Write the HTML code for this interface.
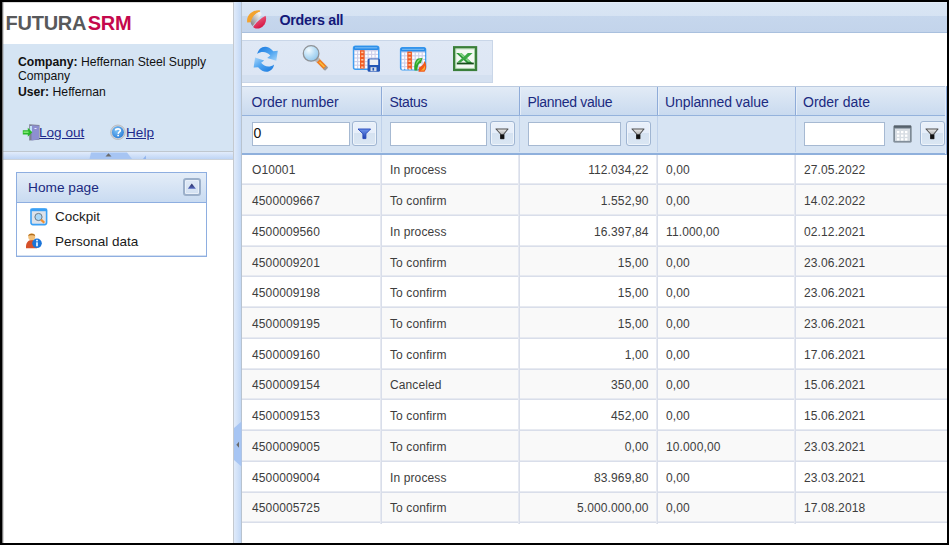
<!DOCTYPE html>
<html><head><meta charset="utf-8">
<style>
*{margin:0;padding:0;box-sizing:border-box}
html,body{width:949px;height:545px;overflow:hidden;background:#000;font-family:"Liberation Sans",sans-serif;position:relative}
body>div{position:absolute}
.t{position:absolute;white-space:nowrap}
</style></head><body>
<div style="left:2px;top:2px;width:945px;height:541px;background:#fff"></div>
<div class="t" style="left:5.5px;top:12px;font-size:20px;font-weight:bold;line-height:22px"><span style="color:#58595b;letter-spacing:-0.25px">FUTURA</span><span style="color:#c4084c;letter-spacing:-0.3px;margin-left:1.5px">SRM</span></div>
<div style="left:3px;top:44px;width:230px;height:107px;background:#d5e4f3"></div>
<div style="left:3px;top:151px;width:230px;height:1px;background:#bfc7cf"></div>
<div class="t" style="left:18px;top:55px;font-size:12.2px;color:#111;line-height:14px"><b>Company:</b> Heffernan Steel Supply</div>
<div class="t" style="left:18px;top:68.5px;font-size:12.2px;color:#111;line-height:14px">Company</div>
<div class="t" style="left:18px;top:85px;font-size:12.2px;color:#111;line-height:14px"><b>User:</b> Heffernan</div>
<div class="t" style="left:39px;top:125px;font-size:13.6px;color:#1e2a8c;text-decoration:underline;line-height:16px">Log out</div>
<div class="t" style="left:126px;top:125px;font-size:13.6px;color:#1e2a8c;text-decoration:underline;line-height:16px">Help</div>
<div style="left:3px;top:152px;width:230px;height:7px;background:linear-gradient(#e2ecfb,#bfd5f5)"></div>
<div style="left:3px;top:159px;width:230px;height:1px;background:#cdd3da"></div>
<div style="left:16px;top:172px;width:191px;height:85px;border:1px solid #8eaee0;background:#fff"></div>
<div style="left:17px;top:255px;width:189px;height:1px;background:#d3e0f2"></div>
<div style="left:17px;top:173px;width:189px;height:30px;background:linear-gradient(#e4edf8,#c9dbf1);border-bottom:1px solid #8eaee0"></div>
<div class="t" style="left:28px;top:180px;font-size:13.7px;color:#1b2a80;line-height:16px">Home page</div>
<div class="t" style="left:55px;top:209px;font-size:13.5px;color:#1a1a1a;line-height:16px">Cockpit</div>
<div class="t" style="left:55px;top:234px;font-size:13.5px;color:#1a1a1a;line-height:16px">Personal data</div>
<div style="left:233px;top:2px;width:1px;height:541px;background:#c4c9cf"></div>
<div style="left:234px;top:2px;width:7px;height:541px;background:linear-gradient(90deg,#dfeafa,#d2e2f8 50%,#c3d8f5)"></div>
<div style="left:241px;top:2px;width:1px;height:541px;background:#b8c3cf"></div>
<div style="left:242px;top:2px;width:705px;height:31px;background:linear-gradient(#e4ecf8 0,#dae6f4 1px,#d6e3f3 14px,#c6d7ed 14px,#c3d4eb 30px);border-bottom:1px solid #a9c0de"></div>
<div class="t" style="left:279.5px;top:11.5px;font-size:14.3px;font-weight:bold;color:#14197a;line-height:16px;letter-spacing:-0.3px">Orders all</div>
<div style="left:242px;top:40px;width:251px;height:43px;background:linear-gradient(#dfe8f5,#dde6f4 82%,#d4e0f0 82%,#d4e0f0);border:1px solid #c9d6e8;border-left:none"></div>
<div style="left:242px;top:86px;width:705px;height:30px;background:linear-gradient(#e2ebf6,#c9daef);border-top:1px solid #bccbe0;border-bottom:1px solid #94b2dc"></div>
<div style="left:242px;top:116px;width:705px;height:39px;background:#d7e4f3;border-bottom:2px solid #8fb0dc"></div>
<div style="left:945px;top:86px;width:1px;height:68px;background:#e4ecf7"></div>
<div style="left:946px;top:86px;width:1px;height:68px;background:#8eabd8"></div>
<div style="left:381px;top:87px;width:1px;height:28px;background:#8eabd8"></div>
<div style="left:382px;top:87px;width:1px;height:28px;background:#e6eef8"></div>
<div style="left:381px;top:116px;width:1px;height:36px;background:#bfd1ea"></div>
<div style="left:519px;top:87px;width:1px;height:28px;background:#8eabd8"></div>
<div style="left:520px;top:87px;width:1px;height:28px;background:#e6eef8"></div>
<div style="left:519px;top:116px;width:1px;height:36px;background:#bfd1ea"></div>
<div style="left:657px;top:87px;width:1px;height:28px;background:#8eabd8"></div>
<div style="left:658px;top:87px;width:1px;height:28px;background:#e6eef8"></div>
<div style="left:657px;top:116px;width:1px;height:36px;background:#bfd1ea"></div>
<div style="left:795px;top:87px;width:1px;height:28px;background:#8eabd8"></div>
<div style="left:796px;top:87px;width:1px;height:28px;background:#e6eef8"></div>
<div style="left:795px;top:116px;width:1px;height:36px;background:#bfd1ea"></div>
<div class="t" style="left:251.5px;top:93.7px;font-size:14px;color:#1b2a80;line-height:16px;letter-spacing:0px">Order number</div>
<div class="t" style="left:389.5px;top:93.7px;font-size:14px;color:#1b2a80;line-height:16px;letter-spacing:-0.34px">Status</div>
<div class="t" style="left:527.5px;top:93.7px;font-size:14px;color:#1b2a80;line-height:16px;letter-spacing:-0.3px">Planned value</div>
<div class="t" style="left:665px;top:93.7px;font-size:14px;color:#1b2a80;line-height:16px;letter-spacing:-0.1px">Unplanned value</div>
<div class="t" style="left:803px;top:93.7px;font-size:14px;color:#1b2a80;line-height:16px;letter-spacing:0px">Order date</div>
<div style="left:252px;top:122px;width:98px;height:24px;background:#fff;border:1px solid #a6b9d2"></div>
<div style="left:390px;top:122px;width:97px;height:24px;background:#fff;border:1px solid #a6b9d2"></div>
<div style="left:528px;top:122px;width:93px;height:24px;background:#fff;border:1px solid #a6b9d2"></div>
<div style="left:804px;top:122px;width:81px;height:24px;background:#fff;border:1px solid #a6b9d2"></div>
<div class="t" style="left:253.5px;top:125px;font-size:14px;color:#111;line-height:16px">0</div>
<div style="left:352px;top:121px;width:25px;height:25px;border:1px solid #9fb5d2;border-radius:3px;box-shadow:inset 0 0 0 1px #eef4fb;background:linear-gradient(#e9f0fa,#e6eefa 46%,#d5e2f1 46%,#dae6f3)"></div>
<div style="left:490px;top:121px;width:25px;height:25px;border:1px solid #9fb5d2;border-radius:3px;box-shadow:inset 0 0 0 1px #eef4fb;background:linear-gradient(#e9f0fa,#e6eefa 46%,#d5e2f1 46%,#dae6f3)"></div>
<div style="left:626px;top:121px;width:25px;height:25px;border:1px solid #9fb5d2;border-radius:3px;box-shadow:inset 0 0 0 1px #eef4fb;background:linear-gradient(#e9f0fa,#e6eefa 46%,#d5e2f1 46%,#dae6f3)"></div>
<div style="left:920px;top:121px;width:25px;height:25px;border:1px solid #9fb5d2;border-radius:3px;box-shadow:inset 0 0 0 1px #eef4fb;background:linear-gradient(#e9f0fa,#e6eefa 46%,#d5e2f1 46%,#dae6f3)"></div>
<div style="left:242px;top:155px;width:705px;height:30px;background:#fff"></div>
<div style="left:242px;top:183px;width:705px;height:1px;background:#e7eaf1"></div>
<div style="left:242px;top:184px;width:705px;height:1px;background:#d9deea"></div>
<div class="t" style="left:252px;top:163px;font-size:12px;color:#3d3d3d;line-height:14px;letter-spacing:0.12px">O10001</div>
<div class="t" style="left:390px;top:163px;font-size:12px;color:#3d3d3d;line-height:14px;letter-spacing:0.12px">In process</div>
<div class="t" style="right:300.5px;top:163px;font-size:12px;color:#3d3d3d;line-height:14px;letter-spacing:0.12px">112.034,22</div>
<div class="t" style="left:666px;top:163px;font-size:12px;color:#3d3d3d;line-height:14px;letter-spacing:0.12px">0,00</div>
<div class="t" style="left:804px;top:163px;font-size:12px;color:#3d3d3d;line-height:14px;letter-spacing:0.12px">27.05.2022</div>
<div style="left:242px;top:185px;width:705px;height:31px;background:#f9f9f9"></div>
<div style="left:242px;top:214px;width:705px;height:1px;background:#e7eaf1"></div>
<div style="left:242px;top:215px;width:705px;height:1px;background:#d9deea"></div>
<div class="t" style="left:252px;top:194px;font-size:12px;color:#3d3d3d;line-height:14px;letter-spacing:0.12px">4500009667</div>
<div class="t" style="left:390px;top:194px;font-size:12px;color:#3d3d3d;line-height:14px;letter-spacing:0.12px">To confirm</div>
<div class="t" style="right:300.5px;top:194px;font-size:12px;color:#3d3d3d;line-height:14px;letter-spacing:0.12px">1.552,90</div>
<div class="t" style="left:666px;top:194px;font-size:12px;color:#3d3d3d;line-height:14px;letter-spacing:0.12px">0,00</div>
<div class="t" style="left:804px;top:194px;font-size:12px;color:#3d3d3d;line-height:14px;letter-spacing:0.12px">14.02.2022</div>
<div style="left:242px;top:216px;width:705px;height:31px;background:#fff"></div>
<div style="left:242px;top:245px;width:705px;height:1px;background:#e7eaf1"></div>
<div style="left:242px;top:246px;width:705px;height:1px;background:#d9deea"></div>
<div class="t" style="left:252px;top:225px;font-size:12px;color:#3d3d3d;line-height:14px;letter-spacing:0.12px">4500009560</div>
<div class="t" style="left:390px;top:225px;font-size:12px;color:#3d3d3d;line-height:14px;letter-spacing:0.12px">In process</div>
<div class="t" style="right:300.5px;top:225px;font-size:12px;color:#3d3d3d;line-height:14px;letter-spacing:0.12px">16.397,84</div>
<div class="t" style="left:666px;top:225px;font-size:12px;color:#3d3d3d;line-height:14px;letter-spacing:0.12px">11.000,00</div>
<div class="t" style="left:804px;top:225px;font-size:12px;color:#3d3d3d;line-height:14px;letter-spacing:0.12px">02.12.2021</div>
<div style="left:242px;top:247px;width:705px;height:30px;background:#f9f9f9"></div>
<div style="left:242px;top:275px;width:705px;height:1px;background:#e7eaf1"></div>
<div style="left:242px;top:276px;width:705px;height:1px;background:#d9deea"></div>
<div class="t" style="left:252px;top:256px;font-size:12px;color:#3d3d3d;line-height:14px;letter-spacing:0.12px">4500009201</div>
<div class="t" style="left:390px;top:256px;font-size:12px;color:#3d3d3d;line-height:14px;letter-spacing:0.12px">To confirm</div>
<div class="t" style="right:300.5px;top:256px;font-size:12px;color:#3d3d3d;line-height:14px;letter-spacing:0.12px">15,00</div>
<div class="t" style="left:666px;top:256px;font-size:12px;color:#3d3d3d;line-height:14px;letter-spacing:0.12px">0,00</div>
<div class="t" style="left:804px;top:256px;font-size:12px;color:#3d3d3d;line-height:14px;letter-spacing:0.12px">23.06.2021</div>
<div style="left:242px;top:277px;width:705px;height:31px;background:#fff"></div>
<div style="left:242px;top:306px;width:705px;height:1px;background:#e7eaf1"></div>
<div style="left:242px;top:307px;width:705px;height:1px;background:#d9deea"></div>
<div class="t" style="left:252px;top:286px;font-size:12px;color:#3d3d3d;line-height:14px;letter-spacing:0.12px">4500009198</div>
<div class="t" style="left:390px;top:286px;font-size:12px;color:#3d3d3d;line-height:14px;letter-spacing:0.12px">To confirm</div>
<div class="t" style="right:300.5px;top:286px;font-size:12px;color:#3d3d3d;line-height:14px;letter-spacing:0.12px">15,00</div>
<div class="t" style="left:666px;top:286px;font-size:12px;color:#3d3d3d;line-height:14px;letter-spacing:0.12px">0,00</div>
<div class="t" style="left:804px;top:286px;font-size:12px;color:#3d3d3d;line-height:14px;letter-spacing:0.12px">23.06.2021</div>
<div style="left:242px;top:308px;width:705px;height:31px;background:#f9f9f9"></div>
<div style="left:242px;top:337px;width:705px;height:1px;background:#e7eaf1"></div>
<div style="left:242px;top:338px;width:705px;height:1px;background:#d9deea"></div>
<div class="t" style="left:252px;top:317px;font-size:12px;color:#3d3d3d;line-height:14px;letter-spacing:0.12px">4500009195</div>
<div class="t" style="left:390px;top:317px;font-size:12px;color:#3d3d3d;line-height:14px;letter-spacing:0.12px">To confirm</div>
<div class="t" style="right:300.5px;top:317px;font-size:12px;color:#3d3d3d;line-height:14px;letter-spacing:0.12px">15,00</div>
<div class="t" style="left:666px;top:317px;font-size:12px;color:#3d3d3d;line-height:14px;letter-spacing:0.12px">0,00</div>
<div class="t" style="left:804px;top:317px;font-size:12px;color:#3d3d3d;line-height:14px;letter-spacing:0.12px">23.06.2021</div>
<div style="left:242px;top:339px;width:705px;height:31px;background:#fff"></div>
<div style="left:242px;top:368px;width:705px;height:1px;background:#e7eaf1"></div>
<div style="left:242px;top:369px;width:705px;height:1px;background:#d9deea"></div>
<div class="t" style="left:252px;top:348px;font-size:12px;color:#3d3d3d;line-height:14px;letter-spacing:0.12px">4500009160</div>
<div class="t" style="left:390px;top:348px;font-size:12px;color:#3d3d3d;line-height:14px;letter-spacing:0.12px">To confirm</div>
<div class="t" style="right:300.5px;top:348px;font-size:12px;color:#3d3d3d;line-height:14px;letter-spacing:0.12px">1,00</div>
<div class="t" style="left:666px;top:348px;font-size:12px;color:#3d3d3d;line-height:14px;letter-spacing:0.12px">0,00</div>
<div class="t" style="left:804px;top:348px;font-size:12px;color:#3d3d3d;line-height:14px;letter-spacing:0.12px">17.06.2021</div>
<div style="left:242px;top:370px;width:705px;height:30px;background:#f9f9f9"></div>
<div style="left:242px;top:398px;width:705px;height:1px;background:#e7eaf1"></div>
<div style="left:242px;top:399px;width:705px;height:1px;background:#d9deea"></div>
<div class="t" style="left:252px;top:378px;font-size:12px;color:#3d3d3d;line-height:14px;letter-spacing:0.12px">4500009154</div>
<div class="t" style="left:390px;top:378px;font-size:12px;color:#3d3d3d;line-height:14px;letter-spacing:0.12px">Canceled</div>
<div class="t" style="right:300.5px;top:378px;font-size:12px;color:#3d3d3d;line-height:14px;letter-spacing:0.12px">350,00</div>
<div class="t" style="left:666px;top:378px;font-size:12px;color:#3d3d3d;line-height:14px;letter-spacing:0.12px">0,00</div>
<div class="t" style="left:804px;top:378px;font-size:12px;color:#3d3d3d;line-height:14px;letter-spacing:0.12px">15.06.2021</div>
<div style="left:242px;top:400px;width:705px;height:31px;background:#fff"></div>
<div style="left:242px;top:429px;width:705px;height:1px;background:#e7eaf1"></div>
<div style="left:242px;top:430px;width:705px;height:1px;background:#d9deea"></div>
<div class="t" style="left:252px;top:409px;font-size:12px;color:#3d3d3d;line-height:14px;letter-spacing:0.12px">4500009153</div>
<div class="t" style="left:390px;top:409px;font-size:12px;color:#3d3d3d;line-height:14px;letter-spacing:0.12px">To confirm</div>
<div class="t" style="right:300.5px;top:409px;font-size:12px;color:#3d3d3d;line-height:14px;letter-spacing:0.12px">452,00</div>
<div class="t" style="left:666px;top:409px;font-size:12px;color:#3d3d3d;line-height:14px;letter-spacing:0.12px">0,00</div>
<div class="t" style="left:804px;top:409px;font-size:12px;color:#3d3d3d;line-height:14px;letter-spacing:0.12px">15.06.2021</div>
<div style="left:242px;top:431px;width:705px;height:31px;background:#f9f9f9"></div>
<div style="left:242px;top:460px;width:705px;height:1px;background:#e7eaf1"></div>
<div style="left:242px;top:461px;width:705px;height:1px;background:#d9deea"></div>
<div class="t" style="left:252px;top:440px;font-size:12px;color:#3d3d3d;line-height:14px;letter-spacing:0.12px">4500009005</div>
<div class="t" style="left:390px;top:440px;font-size:12px;color:#3d3d3d;line-height:14px;letter-spacing:0.12px">To confirm</div>
<div class="t" style="right:300.5px;top:440px;font-size:12px;color:#3d3d3d;line-height:14px;letter-spacing:0.12px">0,00</div>
<div class="t" style="left:666px;top:440px;font-size:12px;color:#3d3d3d;line-height:14px;letter-spacing:0.12px">10.000,00</div>
<div class="t" style="left:804px;top:440px;font-size:12px;color:#3d3d3d;line-height:14px;letter-spacing:0.12px">23.03.2021</div>
<div style="left:242px;top:462px;width:705px;height:31px;background:#fff"></div>
<div style="left:242px;top:491px;width:705px;height:1px;background:#e7eaf1"></div>
<div style="left:242px;top:492px;width:705px;height:1px;background:#d9deea"></div>
<div class="t" style="left:252px;top:471px;font-size:12px;color:#3d3d3d;line-height:14px;letter-spacing:0.12px">4500009004</div>
<div class="t" style="left:390px;top:471px;font-size:12px;color:#3d3d3d;line-height:14px;letter-spacing:0.12px">In process</div>
<div class="t" style="right:300.5px;top:471px;font-size:12px;color:#3d3d3d;line-height:14px;letter-spacing:0.12px">83.969,80</div>
<div class="t" style="left:666px;top:471px;font-size:12px;color:#3d3d3d;line-height:14px;letter-spacing:0.12px">0,00</div>
<div class="t" style="left:804px;top:471px;font-size:12px;color:#3d3d3d;line-height:14px;letter-spacing:0.12px">23.03.2021</div>
<div style="left:242px;top:493px;width:705px;height:30px;background:#f9f9f9"></div>
<div style="left:242px;top:521px;width:705px;height:1px;background:#e7eaf1"></div>
<div style="left:242px;top:522px;width:705px;height:1px;background:#d9deea"></div>
<div class="t" style="left:252px;top:501px;font-size:12px;color:#3d3d3d;line-height:14px;letter-spacing:0.12px">4500005725</div>
<div class="t" style="left:390px;top:501px;font-size:12px;color:#3d3d3d;line-height:14px;letter-spacing:0.12px">To confirm</div>
<div class="t" style="right:300.5px;top:501px;font-size:12px;color:#3d3d3d;line-height:14px;letter-spacing:0.12px">5.000.000,00</div>
<div class="t" style="left:666px;top:501px;font-size:12px;color:#3d3d3d;line-height:14px;letter-spacing:0.12px">0,00</div>
<div class="t" style="left:804px;top:501px;font-size:12px;color:#3d3d3d;line-height:14px;letter-spacing:0.12px">17.08.2018</div>
<div style="left:380px;top:155px;width:1px;height:369px;background:#e6e9f1"></div>
<div style="left:381px;top:155px;width:1px;height:369px;background:#d9deea"></div>
<div style="left:518px;top:155px;width:1px;height:369px;background:#e6e9f1"></div>
<div style="left:519px;top:155px;width:1px;height:369px;background:#d9deea"></div>
<div style="left:656px;top:155px;width:1px;height:369px;background:#e6e9f1"></div>
<div style="left:657px;top:155px;width:1px;height:369px;background:#d9deea"></div>
<div style="left:794px;top:155px;width:1px;height:369px;background:#e6e9f1"></div>
<div style="left:795px;top:155px;width:1px;height:369px;background:#d9deea"></div>
<svg style="position:absolute;left:244px;top:6px;" width="26" height="26" viewBox="0 0 26 26">
<defs><linearGradient id="sg" x1="0.8" y1="0.2" x2="0.1" y2="0.9"><stop offset="0" stop-color="#f0f0f0"/><stop offset="0.4" stop-color="#c8c8c8"/><stop offset="1" stop-color="#8a8a8a"/></linearGradient>
<linearGradient id="sr" x1="0" y1="0" x2="0.6" y2="1"><stop offset="0" stop-color="#f07a95"/><stop offset="1" stop-color="#d5103f"/></linearGradient></defs>
<g transform="translate(12.7 13.2) scale(1.07) translate(-12.7 -13.2)"><path d="M3.8 16.2 C3 10 8 4.2 15.9 5 L15.7 6.5 C11.5 7.7 8.8 11.2 7.4 16 Z" fill="#f3a32f"/>
<path d="M15.7 6.3 C17.2 7 17.5 8.5 16.8 9.6 L9 19.6 C7.5 18.5 7 17 7.2 15.8 C8.5 11 11.5 7.5 15.7 6.3 Z" fill="url(#sg)"/>
<path d="M9.3 20.5 C12 16.5 16 12.5 21 10 C22.5 14 20.5 20 15.5 21.6 C13 22.3 10.8 21.8 9.3 20.5 Z" fill="url(#sr)"/></g>
</svg>
<svg style="position:absolute;left:253px;top:46px;" width="26" height="26" viewBox="0 0 26 26">
<defs><linearGradient id="rg" x1="0" y1="0" x2="1" y2="1"><stop offset="0" stop-color="#1777de"/><stop offset="0.55" stop-color="#4da3f0"/><stop offset="1" stop-color="#a8d6fa"/></linearGradient></defs>
<path d="M4.3 8 C5.3 1.2 13.5 -3 20.3 5.2 L24.8 4.8 L23.3 14.8 L14.2 12 L17.3 9.6 C14 5.5 8.5 4.8 4.3 8 Z" fill="url(#rg)"/>
<path d="M4.3 8 C5.3 1.2 13.5 -3 20.3 5.2 L24.8 4.8 L23.3 14.8 L14.2 12 L17.3 9.6 C14 5.5 8.5 4.8 4.3 8 Z" fill="url(#rg)" transform="rotate(180 12.7 13.2)"/>
</svg>
<svg style="position:absolute;left:298px;top:40px;" width="36" height="34" viewBox="0 0 36 34">
<defs><radialGradient id="mg" cx="0.35" cy="0.3" r="0.8"><stop offset="0" stop-color="#f4fbff"/><stop offset="0.5" stop-color="#b9def6"/><stop offset="1" stop-color="#8cc3ea"/></radialGradient></defs>
<path d="M19.2 19.6 L27.8 28.4" stroke="#f07b22" stroke-width="4.4" stroke-linecap="butt"/>
<path d="M21.5 21.9 L26.5 27" stroke="#f9c13a" stroke-width="1.4"/>
<path d="M26.8 27.4 L28.6 29.2" stroke="#9a9a9a" stroke-width="4.4"/>
<path d="M18 18.4 L20.3 20.8" stroke="#b8b8b8" stroke-width="4.6"/>
<circle cx="13.1" cy="13.4" r="7.8" fill="url(#mg)" stroke="#8f9296" stroke-width="1.3"/>
</svg>
<svg style="position:absolute;left:350px;top:43px;" width="34" height="32" viewBox="0 0 34 32">
<rect x="3.5" y="3.2" width="25.3" height="23" rx="2" fill="#cfd0ea" stroke="#3d9ef2" stroke-width="1.4"/>
<rect x="3.5" y="3.2" width="25.3" height="3.8" rx="1.5" fill="#2a8ce8"/>
<rect x="5.0" y="4.4" width="22.3" height="0.9" fill="#8cc8f7"/>
<rect x="4.7" y="8.4" width="2.3" height="2.4" fill="#fdfdff"/><rect x="8.2" y="8.4" width="2.3" height="2.4" fill="#fdfdff"/><rect x="11.7" y="8.4" width="2.3" height="2.4" fill="#fdfdff"/><rect x="15.2" y="8.4" width="2.3" height="2.4" fill="#fdfdff"/><rect x="18.7" y="8.4" width="2.3" height="2.4" fill="#fdfdff"/><rect x="22.2" y="8.4" width="2.3" height="2.4" fill="#fdfdff"/><rect x="25.7" y="8.4" width="2.3" height="2.4" fill="#fdfdff"/><rect x="4.7" y="12.0" width="2.3" height="2.4" fill="#fdfdff"/><rect x="8.2" y="12.0" width="2.3" height="2.4" fill="#fdfdff"/><rect x="11.7" y="12.0" width="2.3" height="2.4" fill="#fdfdff"/><rect x="15.2" y="12.0" width="2.3" height="2.4" fill="#fdfdff"/><rect x="18.7" y="12.0" width="2.3" height="2.4" fill="#fdfdff"/><rect x="22.2" y="12.0" width="2.3" height="2.4" fill="#fdfdff"/><rect x="25.7" y="12.0" width="2.3" height="2.4" fill="#fdfdff"/><rect x="4.7" y="15.6" width="2.3" height="2.4" fill="#fdfdff"/><rect x="8.2" y="15.6" width="2.3" height="2.4" fill="#fdfdff"/><rect x="11.7" y="15.6" width="2.3" height="2.4" fill="#fdfdff"/><rect x="15.2" y="15.6" width="2.3" height="2.4" fill="#fdfdff"/><rect x="18.7" y="15.6" width="2.3" height="2.4" fill="#fdfdff"/><rect x="22.2" y="15.6" width="2.3" height="2.4" fill="#fdfdff"/><rect x="25.7" y="15.6" width="2.3" height="2.4" fill="#fdfdff"/><rect x="4.7" y="19.2" width="2.3" height="2.4" fill="#fdfdff"/><rect x="8.2" y="19.2" width="2.3" height="2.4" fill="#fdfdff"/><rect x="11.7" y="19.2" width="2.3" height="2.4" fill="#fdfdff"/><rect x="15.2" y="19.2" width="2.3" height="2.4" fill="#fdfdff"/><rect x="18.7" y="19.2" width="2.3" height="2.4" fill="#fdfdff"/><rect x="22.2" y="19.2" width="2.3" height="2.4" fill="#fdfdff"/><rect x="25.7" y="19.2" width="2.3" height="2.4" fill="#fdfdff"/><rect x="4.7" y="22.8" width="2.3" height="2.4" fill="#fdfdff"/><rect x="8.2" y="22.8" width="2.3" height="2.4" fill="#fdfdff"/><rect x="11.7" y="22.8" width="2.3" height="2.4" fill="#fdfdff"/><rect x="15.2" y="22.8" width="2.3" height="2.4" fill="#fdfdff"/><rect x="18.7" y="22.8" width="2.3" height="2.4" fill="#fdfdff"/><rect x="22.2" y="22.8" width="2.3" height="2.4" fill="#fdfdff"/><rect x="25.7" y="22.8" width="2.3" height="2.4" fill="#fdfdff"/>
<rect x="10" y="7.2" width="4.6" height="18.4" fill="#f25a22"/>
<rect x="11.2" y="8.600000000000001" width="2.2" height="1.6" fill="#ffc9a0"/>
<rect x="11.2" y="12.3" width="2.2" height="1.6" fill="#ffc9a0"/>
<rect x="11.2" y="16.0" width="2.2" height="1.6" fill="#ffc9a0"/>
<rect x="11.2" y="19.7" width="2.2" height="1.6" fill="#ffc9a0"/>
<rect x="11.2" y="23.4" width="2.2" height="1.6" fill="#ffc9a0"/>

<rect x="17.6" y="15.6" width="12.4" height="13.2" rx="1.5" fill="#2356b6"/>
<rect x="19.6" y="16.4" width="8.6" height="5.6" fill="#eef0f4"/>
<rect x="20.5" y="24.2" width="6" height="4" fill="#d7dde8"/>
<rect x="22.5" y="24.8" width="1.6" height="2.8" fill="#2356b6"/>
</svg>
<svg style="position:absolute;left:397px;top:43px;" width="34" height="32" viewBox="0 0 34 32">
<rect x="3.6" y="4.6" width="25" height="22.2" rx="2" fill="#cfd0ea" stroke="#3d9ef2" stroke-width="1.4"/>
<rect x="3.6" y="4.6" width="25" height="3.8" rx="1.5" fill="#2a8ce8"/>
<rect x="5.1" y="5.8" width="22" height="0.9" fill="#8cc8f7"/>
<rect x="4.8" y="9.8" width="2.3" height="2.4" fill="#fdfdff"/><rect x="8.3" y="9.8" width="2.3" height="2.4" fill="#fdfdff"/><rect x="11.8" y="9.8" width="2.3" height="2.4" fill="#fdfdff"/><rect x="15.3" y="9.8" width="2.3" height="2.4" fill="#fdfdff"/><rect x="18.8" y="9.8" width="2.3" height="2.4" fill="#fdfdff"/><rect x="22.3" y="9.8" width="2.3" height="2.4" fill="#fdfdff"/><rect x="25.8" y="9.8" width="2.3" height="2.4" fill="#fdfdff"/><rect x="4.8" y="13.4" width="2.3" height="2.4" fill="#fdfdff"/><rect x="8.3" y="13.4" width="2.3" height="2.4" fill="#fdfdff"/><rect x="11.8" y="13.4" width="2.3" height="2.4" fill="#fdfdff"/><rect x="15.3" y="13.4" width="2.3" height="2.4" fill="#fdfdff"/><rect x="18.8" y="13.4" width="2.3" height="2.4" fill="#fdfdff"/><rect x="22.3" y="13.4" width="2.3" height="2.4" fill="#fdfdff"/><rect x="25.8" y="13.4" width="2.3" height="2.4" fill="#fdfdff"/><rect x="4.8" y="17.0" width="2.3" height="2.4" fill="#fdfdff"/><rect x="8.3" y="17.0" width="2.3" height="2.4" fill="#fdfdff"/><rect x="11.8" y="17.0" width="2.3" height="2.4" fill="#fdfdff"/><rect x="15.3" y="17.0" width="2.3" height="2.4" fill="#fdfdff"/><rect x="18.8" y="17.0" width="2.3" height="2.4" fill="#fdfdff"/><rect x="22.3" y="17.0" width="2.3" height="2.4" fill="#fdfdff"/><rect x="25.8" y="17.0" width="2.3" height="2.4" fill="#fdfdff"/><rect x="4.8" y="20.6" width="2.3" height="2.4" fill="#fdfdff"/><rect x="8.3" y="20.6" width="2.3" height="2.4" fill="#fdfdff"/><rect x="11.8" y="20.6" width="2.3" height="2.4" fill="#fdfdff"/><rect x="15.3" y="20.6" width="2.3" height="2.4" fill="#fdfdff"/><rect x="18.8" y="20.6" width="2.3" height="2.4" fill="#fdfdff"/><rect x="22.3" y="20.6" width="2.3" height="2.4" fill="#fdfdff"/><rect x="25.8" y="20.6" width="2.3" height="2.4" fill="#fdfdff"/><rect x="4.8" y="24.2" width="2.3" height="2.4" fill="#fdfdff"/><rect x="8.3" y="24.2" width="2.3" height="2.4" fill="#fdfdff"/><rect x="11.8" y="24.2" width="2.3" height="2.4" fill="#fdfdff"/><rect x="15.3" y="24.2" width="2.3" height="2.4" fill="#fdfdff"/><rect x="18.8" y="24.2" width="2.3" height="2.4" fill="#fdfdff"/><rect x="22.3" y="24.2" width="2.3" height="2.4" fill="#fdfdff"/><rect x="25.8" y="24.2" width="2.3" height="2.4" fill="#fdfdff"/>
<rect x="10.3" y="8.6" width="4.6" height="17.6" fill="#f25a22"/>
<rect x="11.5" y="10.0" width="2.2" height="1.6" fill="#ffc9a0"/>
<rect x="11.5" y="13.7" width="2.2" height="1.6" fill="#ffc9a0"/>
<rect x="11.5" y="17.4" width="2.2" height="1.6" fill="#ffc9a0"/>
<rect x="11.5" y="21.1" width="2.2" height="1.6" fill="#ffc9a0"/>
<rect x="11.5" y="24.799999999999997" width="2.2" height="1.6" fill="#ffc9a0"/>

<path d="M17.5 27.5 C16.5 22 18.5 16.5 21 15.5 L25.5 15 L24 20 C21.5 20 20.5 23 20.5 27.5 Z" fill="#2ea82e"/>
<path d="M19 22 C19.5 18.5 21 16.5 23 16.3 L24.5 16.2 C22 17.5 20.5 19.5 19 22Z" fill="#8fe27a"/>
<path d="M21.5 28.8 L22 24.5 C24.5 23.5 27 21 27.5 18 C29.5 20.5 30 25.5 27.5 28.8 Z" fill="#f25a1a"/>
<path d="M23.5 27.5 C25.5 26.5 27 25 27.8 22.5 C28.3 24.5 28 26.5 27 27.5Z" fill="#ffb030"/>
</svg>
<svg style="position:absolute;left:448px;top:42px;" width="34" height="32" viewBox="0 0 34 32">
<rect x="6.2" y="5.3" width="21.8" height="22.6" fill="#f4f9f4" stroke="#3a7f3a" stroke-width="2.4"/>
<rect x="7.8" y="6.9" width="18.6" height="19.4" fill="none" stroke="#9fd09f" stroke-width="0.8"/>
<path d="M8.2 11 L13.5 11 L25 21.8 L19.6 21.8 Z" fill="#2a9436"/>
<path d="M10.5 11 L13.2 11 L22.5 19.8 L20 19.8 Z" fill="#86d886"/>
<path d="M19.8 11 L24.6 11 L17.5 17.5 L13.6 17 Z" fill="#3aa844"/>
<path d="M9 20.6 L14.5 15.8 L16.5 17.6 L12.5 20.6 Z" fill="#3aa844"/>
<rect x="8.8" y="20.6" width="17" height="1.8" fill="#16501a"/>
</svg>
<svg style="position:absolute;left:18px;top:118px;" width="26" height="26" viewBox="0 0 26 26">
<path d="M11.2 6.2 L21.5 7 L21.5 21.8 L11.2 22.4 Z" fill="#7c7f92"/>
<path d="M13.5 7.2 L21 7.8 L21 21.2 L13.5 22.4 Z" fill="#8d8fd0"/>
<rect x="12" y="8" width="2" height="6" fill="#bfe3f7"/>
<rect x="16.5" y="10" width="2" height="1" fill="#e6e8ff"/>
<path d="M4.8 12.2 L9.8 12.2 L9.8 9.8 L14.3 14.3 L9.8 18.8 L9.8 16.5 L4.8 16.5 Z" fill="#28b828"/>
<rect x="5.5" y="13.4" width="5" height="1.6" fill="#7ce870"/>
</svg>
<svg style="position:absolute;left:105px;top:118px;" width="26" height="26" viewBox="0 0 26 26">
<defs><radialGradient id="hg" cx="0.4" cy="0.35" r="0.7"><stop offset="0" stop-color="#7ec3f7"/><stop offset="1" stop-color="#2b7ed8"/></radialGradient></defs>
<circle cx="12.9" cy="14.3" r="7.3" fill="#d0d2d6" stroke="#b4b6ba" stroke-width="0.8"/>
<circle cx="12.9" cy="14.3" r="6" fill="url(#hg)"/>
<path d="M10.6 12.4 C10.6 10.5 15.5 10.2 15.3 12.6 C15.2 14 13.3 14 13.2 15.9" stroke="#fff" stroke-width="1.6" fill="none"/>
<rect x="12.3" y="16.8" width="1.7" height="1.5" fill="#fff"/>
</svg>
<svg style="position:absolute;left:22px;top:204px;" width="26" height="26" viewBox="0 0 26 26">
<rect x="9" y="5" width="15.6" height="15.6" rx="2" fill="#dde2ea" stroke="#3aa0f5" stroke-width="1.6"/>
<rect x="8.5" y="4.6" width="16.6" height="2.6" fill="#3aa0f5"/>
<circle cx="16.5" cy="13" r="3.6" fill="#a9d7f7" stroke="#6c7a86" stroke-width="1"/>
<path d="M19 15.6 L22.3 18.8" stroke="#f19030" stroke-width="2.2"/>
</svg>
<svg style="position:absolute;left:22px;top:228px;" width="26" height="26" viewBox="0 0 26 26">
<path d="M4 20.2 C3.6 15 6 12 9.5 12 C13 12 15 14.5 15 20.2 Z" fill="#d5502a"/>
<circle cx="9.7" cy="8.8" r="3.5" fill="#f3c07a"/>
<path d="M6.2 8.2 C6.2 5 13.2 5 13.2 8.2 C12 6.8 7.5 6.8 6.2 8.2Z" fill="#b06d1e"/>
<circle cx="15" cy="15.3" r="4.8" fill="#1b74d8"/>
<rect x="14.2" y="11.8" width="1.6" height="1.6" fill="#fff"/>
<rect x="14.2" y="14.3" width="1.6" height="4" fill="#fff"/>
</svg>
<div style="left:183px;top:178px;width:18px;height:18px;border:2px solid #9cb0ca;border-radius:3px;box-shadow:inset 0 0 0 1px #e9f0f9;background:linear-gradient(#dfe9f6,#d3e1f2)"></div>
<svg style="position:absolute;left:183px;top:178px;" width="18" height="18" viewBox="0 0 18 18"><defs><linearGradient id="tg" x1="0" y1="0" x2="0" y2="1"><stop offset="0" stop-color="#25285a"/><stop offset="1" stop-color="#5468c0"/></linearGradient></defs><path d="M4.8 10.7 L8.8 5.5 L12.9 10.7 Z" fill="url(#tg)"/></svg>
<svg style="position:absolute;left:352px;top:121px;" width="25" height="25" viewBox="0 0 25 25"><defs><linearGradient id="fg352" x1="0" y1="0" x2="0" y2="1"><stop offset="0" stop-color="#6f96ee"/><stop offset="1" stop-color="#1f3fae"/></linearGradient></defs><path d="M6 8 L18.6 8 L13.9 12.8 L13.9 17.6 L10.9 17.6 L10.9 12.8 Z" fill="url(#fg352)" stroke="#2446b8" stroke-width="0.9" stroke-linejoin="round"/></svg>
<svg style="position:absolute;left:490px;top:121px;" width="25" height="25" viewBox="0 0 25 25"><defs><linearGradient id="fg490" x1="0" y1="0" x2="0" y2="1"><stop offset="0" stop-color="#f0f0f0"/><stop offset="0.5" stop-color="#b8b8b8"/><stop offset="0.62" stop-color="#555"/><stop offset="1" stop-color="#0a0a0a"/></linearGradient></defs><path d="M6 8 L18 8 L13.9 13 L13.9 17.6 L10.6 17.6 L10.6 13 Z" fill="url(#fg490)" stroke="#505050" stroke-width="1.1" stroke-linejoin="round"/><rect x="10.4" y="13.5" width="3.7" height="4.3" fill="#111"/></svg>
<svg style="position:absolute;left:626px;top:121px;" width="25" height="25" viewBox="0 0 25 25"><defs><linearGradient id="fg626" x1="0" y1="0" x2="0" y2="1"><stop offset="0" stop-color="#f0f0f0"/><stop offset="0.5" stop-color="#b8b8b8"/><stop offset="0.62" stop-color="#555"/><stop offset="1" stop-color="#0a0a0a"/></linearGradient></defs><path d="M6 8 L18 8 L13.9 13 L13.9 17.6 L10.6 17.6 L10.6 13 Z" fill="url(#fg626)" stroke="#505050" stroke-width="1.1" stroke-linejoin="round"/><rect x="10.4" y="13.5" width="3.7" height="4.3" fill="#111"/></svg>
<svg style="position:absolute;left:920px;top:121px;" width="25" height="25" viewBox="0 0 25 25"><defs><linearGradient id="fg920" x1="0" y1="0" x2="0" y2="1"><stop offset="0" stop-color="#f0f0f0"/><stop offset="0.5" stop-color="#b8b8b8"/><stop offset="0.62" stop-color="#555"/><stop offset="1" stop-color="#0a0a0a"/></linearGradient></defs><path d="M6 8 L18 8 L13.9 13 L13.9 17.6 L10.6 17.6 L10.6 13 Z" fill="url(#fg920)" stroke="#505050" stroke-width="1.1" stroke-linejoin="round"/><rect x="10.4" y="13.5" width="3.7" height="4.3" fill="#111"/></svg>
<svg style="position:absolute;left:893px;top:125px;" width="19" height="18" viewBox="0 0 19 18"><rect x="0.5" y="0.8" width="18" height="16.5" rx="1" fill="#7d8a96" stroke="#9aa6b1"/><rect x="1" y="0.5" width="17" height="2.2" fill="#56616b"/><rect x="2" y="3.6" width="15" height="12.3" fill="#d7dde3"/><rect x="4.0" y="6.0" width="2.4" height="2.2" fill="#fff"/><rect x="8.0" y="6.0" width="2.4" height="2.2" fill="#fff"/><rect x="12.0" y="6.0" width="2.4" height="2.2" fill="#fff"/><rect x="4.0" y="9.6" width="2.4" height="2.2" fill="#fff"/><rect x="8.0" y="9.6" width="2.4" height="2.2" fill="#fff"/><rect x="12.0" y="9.6" width="2.4" height="2.2" fill="#fff"/><rect x="4.0" y="13.2" width="2.4" height="2.2" fill="#fff"/><rect x="8.0" y="13.2" width="2.4" height="2.2" fill="#fff"/><rect x="12.0" y="13.2" width="2.4" height="2.2" fill="#fff"/></svg>
<svg style="position:absolute;left:84px;top:152px;" width="70" height="8" viewBox="0 0 70 8"><path d="M5.5 7 L7 0.5 L43 0.5 L48 7 Z" fill="#a7c5f3"/><path d="M21.5 4.5 L24.5 1.2 L27.5 4.5 Z" fill="#6b6b6b"/><path d="M59 7 L61.8 3.5 L62 7Z" fill="#8fb3ee"/></svg>
<svg style="position:absolute;left:234px;top:418px;" width="8" height="52" viewBox="0 0 8 52"><path d="M0 10 L7.5 3.5 L7.5 48.5 L0 42 Z" fill="#a7c5f3"/><path d="M2.3 26.7 L5 23.7 L5 29.7 Z" fill="#6b6b6b"/></svg>
<div style="left:2px;top:2px;width:231px;height:1px;background:#dcdcdc"></div>
<div style="left:242px;top:2px;width:705px;height:1px;background:#e2ebf7"></div>
<div style="left:2px;top:2px;width:1px;height:541px;background:#7a7a7a"></div>
<div style="left:3px;top:2px;width:1px;height:541px;background:rgba(120,120,120,0.3)"></div>
</body></html>
